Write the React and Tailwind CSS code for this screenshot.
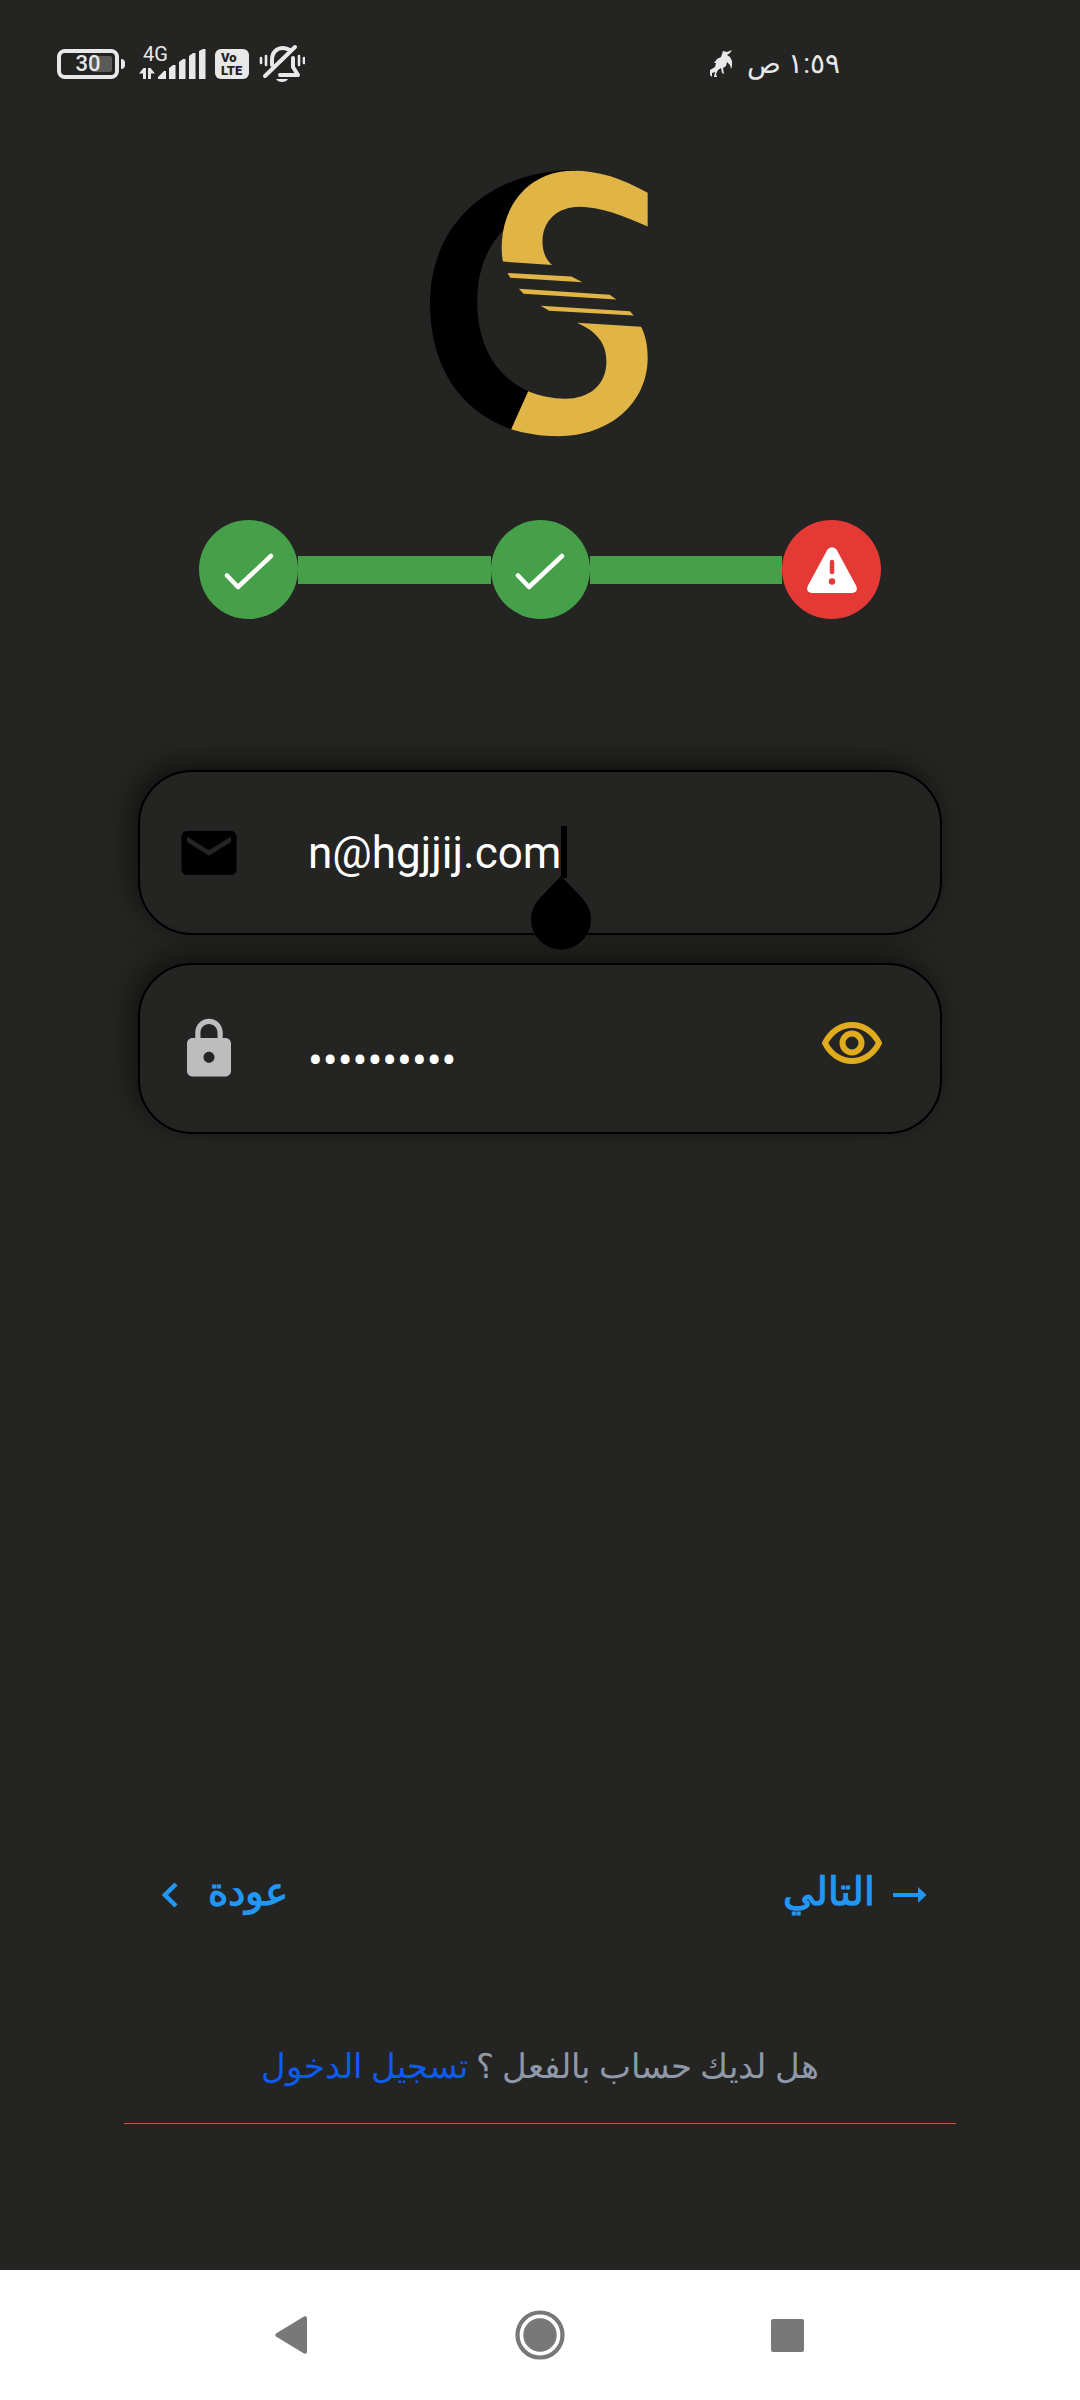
import React from "react";

function StatusBar() {
  return (
    <header className="flex h-32 items-center pl-[57px] pr-[240px] text-[#e8e8e8]">
      <div className="flex items-center">
        <div className="relative flex h-[30px] w-[62px] items-center justify-center rounded-lg border-4 border-[#e8e8e8]">
          <span className="absolute right-[3px] h-4 w-5 rounded-xs bg-[#5a5a58]" />
          <span className="relative text-[22px] leading-6 font-medium">30</span>
        </div>
        <span className="ml-0.5 h-[10px] w-1 rounded-r-sm bg-[#e8e8e8]" />
      </div>
      <div className="relative ml-3.5 h-8 w-[68px]">
        <span className="absolute -top-1 left-1 text-xl leading-5">4G</span>
        <svg viewBox="0 0 68 32" className="h-8 w-[68px]" fill="currentColor" aria-hidden="true">
          <path d="M0 25.500 4.500 20h2.500v11H4v-5.500zM9 31V20h2.500l4.500 5.500h-4V31z" />
          <path d="M19 31v-2l6-6h2v8zM30 31V20l4-3h2.500v14zM40 31V14l4-3h2.500v20zM50 31V8l4-3h2.500v26zM60 31V3l4-2h2.500v30z" />
        </svg>
      </div>
      <div className="ml-2 flex h-[30px] w-[34px] flex-col justify-center rounded-md bg-[#e8e8e8] pl-1.5 text-[13px] leading-[13px] font-black text-[#242422]">
        <span>Vo</span>
        <span>LTE</span>
      </div>
      <svg viewBox="0 0 46 40" className="ml-2.5 h-10 w-[46px]" fill="none" stroke="currentColor" strokeWidth="4" strokeLinecap="round" strokeLinejoin="round" aria-hidden="true">
        <path d="M6 32 36 3" />
        <path d="M13 21v-5C13 8 18 4 24 4c3 0 5 1 7 2M34 14v9l5 8H21" />
        <path d="M2 14v5M7 12v9M40 12v9M45 14v5" strokeWidth="2.600" />
        <path d="M17 35h12c-2 4-10 4-12 0z" fill="currentColor" stroke="none" />
      </svg>
      <svg viewBox="0 0 24 28" className="ml-auto h-7 w-6" fill="currentColor" aria-hidden="true">
        <path d="M14 1l4 1 5-2-2 3-3 2 3 2 2 4v5l-1 3-1-4-3-3-1 4-3 2 1 6-2-1-1-5-3 2-2 4 1 3H5l1-5-3 1 0 4-2-2 0-5 5-3 1-4-2 0 3-4 4-2z" />
      </svg>
      <span dir="rtl" className="ml-3.5 text-[28px] leading-10">١:٥٩ ص</span>
    </header>
  );
}

function Logo() {
  return (
    <svg viewBox="60 60 655 802" className="mx-auto mt-[42px] h-[267px] w-[220px] pr-0.5" role="img" aria-label="GS">
      <path fill="#000" d="M500 60C240 60 60 220 60 462c0 188 90 323 244 377l51-114C260 680 202 590 202 455c0-85 23-155 78-215z" />
      <g fill="#e0b445">
        <path d="M714 128v102C640 195 565 170 510 170c-70 0-112 45-112 105 0 30 10 55 29 70L279 335c-4-20-4-45-3-60C284 150 370 62 490 62c80 0 145 23 224 66z" />
        <path d="M293 369l192 11 33 17-217-13zM327 417l273 18 20 14-279-17zM392 468l269 16 11 13-254-14z" />
        <path d="M502 519l192 12c13 24 20 54 20 94 0 135-114 235-269 235-50 0-100-8-141-21l51-114c35 15 75 22 110 22 75 0 125-42 125-112 0-55-30-90-88-116z" />
      </g>
    </svg>
  );
}

function Check() {
  return (
    <li className="flex size-[99px] shrink-0 items-center justify-center rounded-full bg-[#45a049]">
      <svg viewBox="0 0 50 37" className="mt-1 h-[37px] w-[50px]" fill="none" stroke="#fff" strokeWidth="4.500" strokeLinecap="round" strokeLinejoin="round" aria-label="تم">
        <path d="M3 22.500 14 34 47 3" />
      </svg>
    </li>
  );
}

function Steps() {
  return (
    <ol className="mt-[83px] flex items-center px-[199px]">
      <Check />
      <li className="h-7 flex-1 bg-[#45a049]" aria-hidden="true" />
      <Check />
      <li className="h-7 flex-1 bg-[#45a049]" aria-hidden="true" />
      <li className="flex size-[99px] shrink-0 items-center justify-center rounded-full bg-[#e53935]">
        <svg viewBox="0 0 50 46" className="h-[46px] w-[50px]" aria-label="خطأ">
          <path fill="#fff" d="M20.500 2.500Q25-2 29.500 2.500L49 38.500Q52 45 45 46H5Q-2 45 1 38.500z" />
          <path stroke="#e53935" strokeWidth="4.500" strokeLinecap="round" d="M25 15v10" />
          <circle cx="25" cy="34.500" r="3.200" fill="#e53935" />
        </svg>
      </li>
    </ol>
  );
}

const fieldBox =
  "relative flex items-center rounded-[54px] border-2 border-black bg-[#242422] pl-9 pr-[58px] shadow-[-6px_-8px_28px_rgba(0,0,0,0.5)]";
const inputText =
  "ml-[66px] min-w-0 flex-1 bg-transparent text-[44px] leading-[52px] text-white outline-none";

function Fields() {
  return (
    <div className="mt-[151px] flex flex-col gap-7 px-[138px]">
      <div className={`${fieldBox} h-[165px]`}>
        <label htmlFor="email" aria-label="البريد الإلكتروني">
          <svg viewBox="0 0 24 24" className="size-[66px]" fill="#000">
            <path d="M20 4H4c-1.100 0-2 .9-2 2v12c0 1.100.9 2 2 2h16c1.100 0 2-.9 2-2V6c0-1.100-.9-2-2-2zm0 4-8 5-8-5V6l8 5 8-5z" />
          </svg>
        </label>
        <input id="email" type="email" defaultValue="n@hgjjij.com" className={inputText} />
        <span className="absolute top-[54px] left-[421px] h-[52px] w-1.5 bg-black" />
        <svg viewBox="0 0 60 74" className="absolute top-[104px] left-[391px] h-[74px] w-[60px]" aria-hidden="true">
          <path d="M30 0 8.500 22.500A30 30 0 1 0 51.500 22.500z" />
        </svg>
      </div>
      <div className={`${fieldBox} h-[171px]`}>
        <label htmlFor="password" aria-label="كلمة المرور">
          <svg viewBox="0 0 24 24" className="size-[66px]" fill="#bdbdbd">
            <path d="M18 8h-1V6c0-2.760-2.240-5-5-5S7 3.240 7 6v2H6c-1.100 0-2 .9-2 2v10c0 1.100.9 2 2 2h12c1.100 0 2-.9 2-2V10c0-1.100-.9-2-2-2zm-6 9c-1.100 0-2-.9-2-2s.9-2 2-2 2 .9 2 2-.9 2-2 2zm3.100-9H8.900V6c0-1.710 1.390-3.100 3.100-3.100s3.100 1.390 3.100 3.100z" />
          </svg>
        </label>
        <input id="password" type="password" defaultValue="abcdefghij" className={`${inputText} mt-6`} />
        <button type="button" aria-label="إظهار كلمة المرور" className="mb-3">
          <svg viewBox="0 0 60 42" className="h-[42px] w-[60px]" fill="none" stroke="#e0ab1c" strokeWidth="6" strokeLinejoin="round">
            <path d="M3 21C15-3 45-3 57 21 45 45 15 45 3 21z" />
            <circle cx="30" cy="21" r="9.500" />
          </svg>
        </button>
      </div>
    </div>
  );
}

function Footer() {
  return (
    <footer className="mt-auto">
      <div className="flex h-20 items-center justify-between pl-[162px] pr-[153px] font-bold text-[#2196f3]">
        <button type="button" className="flex items-center gap-[30px]">
          <svg viewBox="0 0 16 26" className="h-[26px] w-4" fill="none" stroke="currentColor" strokeWidth="4.500" aria-hidden="true">
            <path d="M14 2 3 13l11 11" />
          </svg>
          <span className="pb-1.5 text-[39px] leading-[60px]">عودة</span>
        </button>
        <button type="button" className="flex items-center gap-[18px]">
          <span className="pb-1.5 text-[39px] leading-[60px]">التالي</span>
          <svg viewBox="0 0 34 16" className="h-4 w-[34px]" fill="currentColor" aria-hidden="true">
            <path d="M0 6h25V0l8.500 8-8.500 8v-6H0z" />
          </svg>
        </button>
      </div>
      <div className="mx-[124px] mt-[101px] mb-[146px] border-b border-[#c8584c]">
        <p dir="rtl" className="border-b border-[#5a0a0a] pb-[26px] text-center text-[34px] leading-[60px] text-[#8f98a8]">
          هل لديك حساب بالفعل ؟ <a href="#login" className="text-[#0d5bf0]">تسجيل الدخول</a>
        </p>
      </div>
    </footer>
  );
}

function NavBar() {
  return (
    <nav className="grid h-[130px] grid-cols-[1fr_auto_1fr] items-center bg-white text-[#787878]">
      <button type="button" aria-label="رجوع" className="mr-[208px] justify-self-end">
        <svg viewBox="0 0 32 38" className="h-[38px] w-8" fill="currentColor">
          <path d="M1 17.500 29 .5q3-1 3 2v33q0 3-3 2L1 20.500q-1.500-1.500 0-3z" />
        </svg>
      </button>
      <button type="button" aria-label="الرئيسية">
        <svg viewBox="0 0 50 50" className="size-[50px]">
          <circle cx="25" cy="25" r="22.500" fill="none" stroke="currentColor" strokeWidth="4.200" />
          <circle cx="25" cy="25" r="16.700" fill="currentColor" />
        </svg>
      </button>
      <button type="button" aria-label="التطبيقات" className="ml-[206px] size-[33px] rounded-xs bg-current" />
    </nav>
  );
}

export default function App() {
  return (
    <div className="flex min-h-screen flex-col bg-[#242422] font-[Roboto,sans-serif]">
      <StatusBar />
      <Logo />
      <Steps />
      <Fields />
      <Footer />
      <NavBar />
    </div>
  );
}
